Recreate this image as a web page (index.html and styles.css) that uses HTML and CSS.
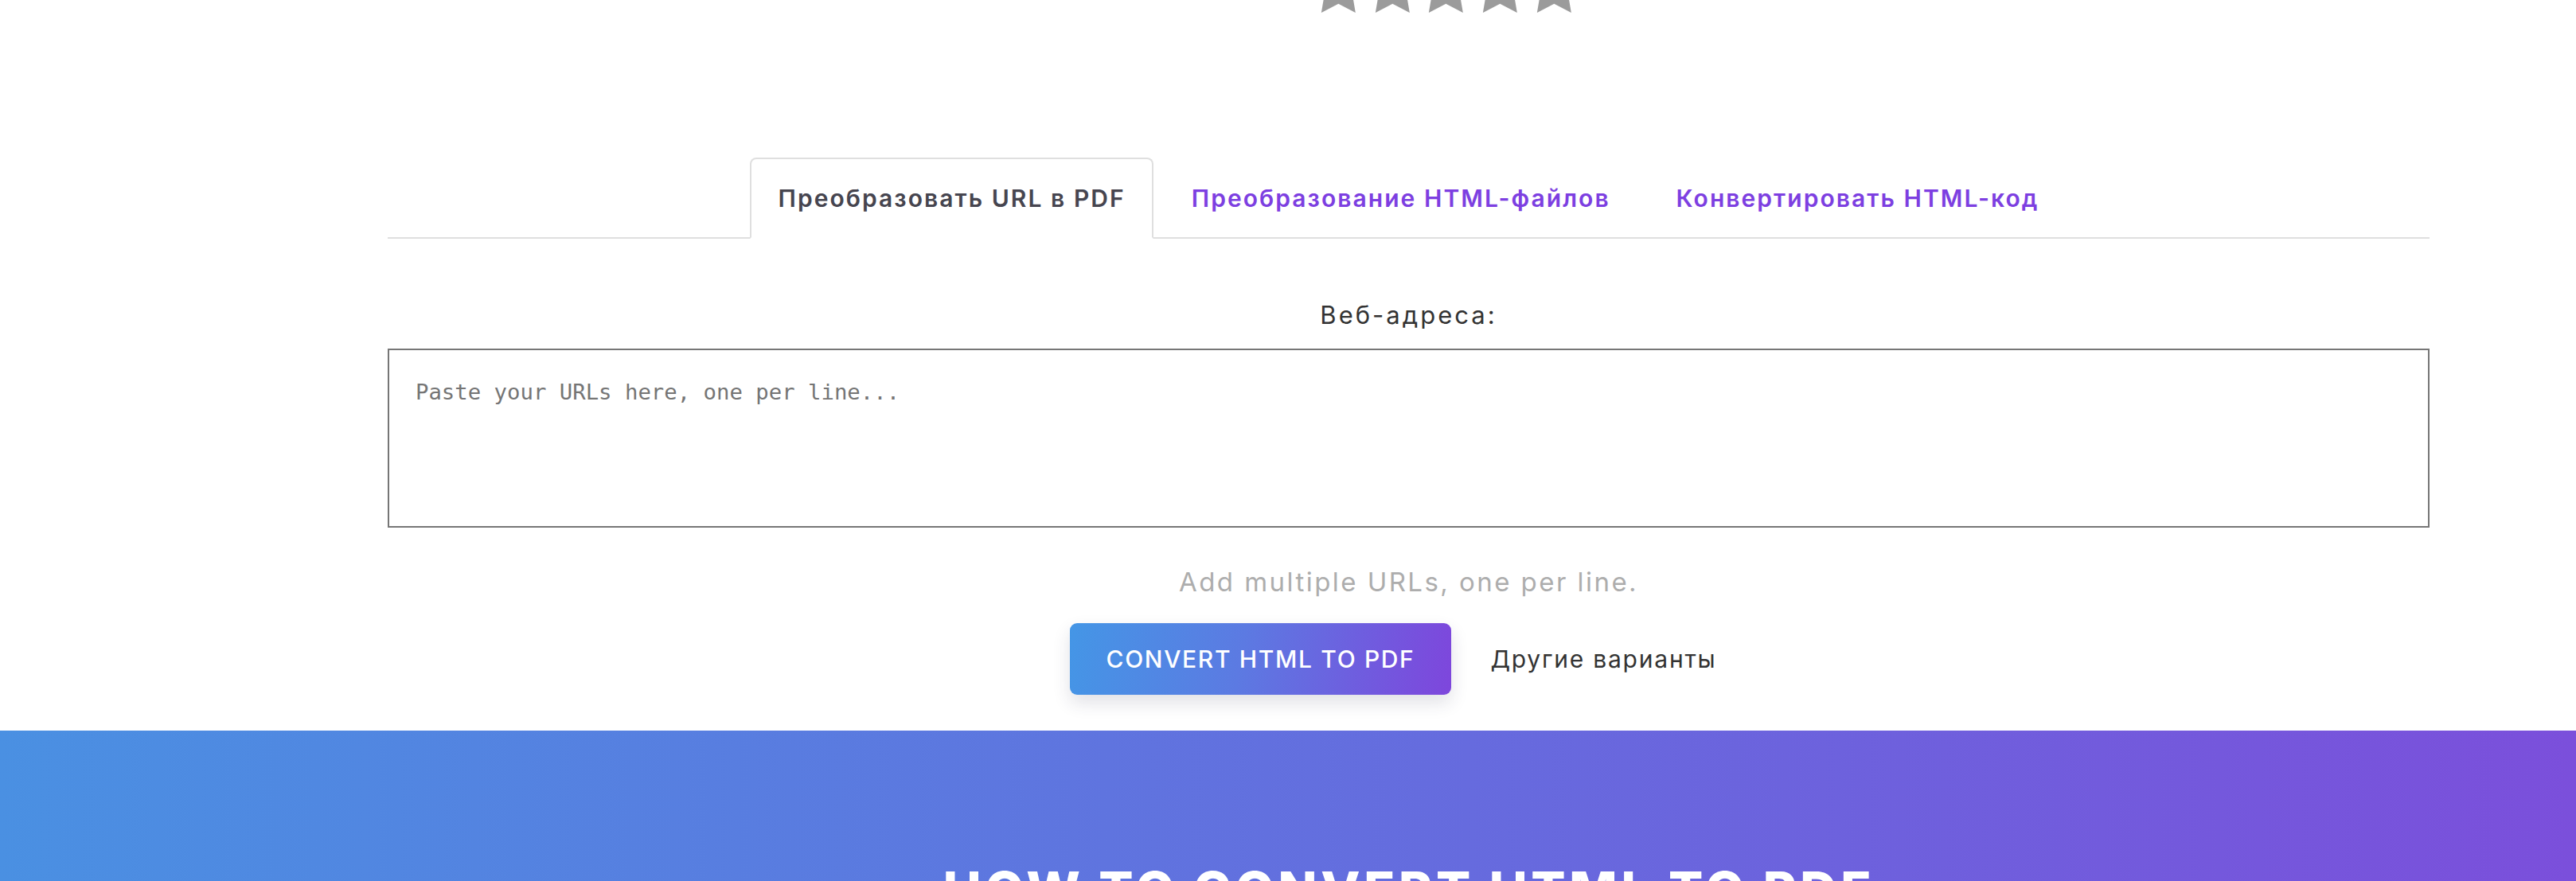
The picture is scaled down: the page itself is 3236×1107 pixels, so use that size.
FILE: index.html
```html
<!DOCTYPE html>
<html lang="ru">
<head>
<meta charset="utf-8">
<title>HTML в PDF</title>
<link rel="stylesheet" href="styles.css">
</head>
<body>
<div class="rating">
  <svg class="star" viewBox="5 16.42 14 4.6"><path d="M12 2l3.09 6.26L22 9.27l-5 4.87 1.18 6.88L12 17.77l-6.18 3.25L7 14.14 2 9.27l6.91-1.01L12 2z"/></svg>
  <svg class="star" viewBox="5 16.42 14 4.6"><path d="M12 2l3.09 6.26L22 9.27l-5 4.87 1.18 6.88L12 17.77l-6.18 3.25L7 14.14 2 9.27l6.91-1.01L12 2z"/></svg>
  <svg class="star" viewBox="5 16.42 14 4.6"><path d="M12 2l3.09 6.26L22 9.27l-5 4.87 1.18 6.88L12 17.77l-6.18 3.25L7 14.14 2 9.27l6.91-1.01L12 2z"/></svg>
  <svg class="star" viewBox="5 16.42 14 4.6"><path d="M12 2l3.09 6.26L22 9.27l-5 4.87 1.18 6.88L12 17.77l-6.18 3.25L7 14.14 2 9.27l6.91-1.01L12 2z"/></svg>
  <svg class="star" viewBox="5 16.42 14 4.6"><path d="M12 2l3.09 6.26L22 9.27l-5 4.87 1.18 6.88L12 17.77l-6.18 3.25L7 14.14 2 9.27l6.91-1.01L12 2z"/></svg>
</div>
<main class="tool">
  <ul class="tabs">
    <li class="tab active">Преобразовать URL в PDF</li>
    <li class="tab">Преобразование HTML-файлов</li>
    <li class="tab">Конвертировать HTML-код</li>
  </ul>
  <div class="pane">
    <label class="label" for="urls">Веб-адреса:</label>
    <textarea id="urls" class="urls" placeholder="Paste your URLs here, one per line..."></textarea>
    <p class="hint">Add multiple URLs, one per line.</p>
    <div class="actions">
      <button class="btn-convert" type="button">CONVERT HTML TO PDF</button>
      <button class="btn-more" type="button">Другие варианты</button>
    </div>
  </div>
</main>
<section class="howto">
  <h2 class="howto-title">HOW TO CONVERT HTML TO PDF</h2>
</section>
</body>
</html>
```

FILE: styles.css
```css
html, body {
  margin: 0;
  padding: 0;
  background: #fff;
}
body {
  font-family: Inter, "Noto Sans", sans-serif;
  color: #333;
  overflow: hidden;
}
.rating {
  display: flex;
  gap: 19px;
  padding-left: 1657px;
  height: 16px;
}
.star {
  display: block;
  width: 48.7px;
  height: 16px;
  fill: #9b9b9b;
}
.tool {
  margin-left: 487px;
  width: 2565px;
  padding-top: 182px;
}
.tabs {
  list-style: none;
  margin: 0;
  padding: 0;
  display: flex;
  justify-content: center;
  gap: 12px;
  border-bottom: 2px solid #dfdfdf;
}
.tab {
  margin-bottom: -2px;
  padding: 31px 33.5px;
  border: 2px solid transparent;
  border-radius: 8px 8px 0 0;
  font-size: 30px;
  line-height: 36px;
  font-weight: 600;
  letter-spacing: 2.05px;
  color: #7d3fe1;
}
.tab.active {
  color: #46454f;
  background: #fff;
  border-color: #dfdfdf #dfdfdf #fff;
}
.label {
  display: block;
  margin-top: 76px;
  text-align: center;
  font-size: 31px;
  line-height: 40px;
  letter-spacing: 3px;
  color: #333;
}
.urls {
  display: block;
  box-sizing: border-box;
  width: 100%;
  height: 225px;
  margin: 22px 0 0;
  padding: 37px 33px;
  border: 2px solid #767676;
  border-radius: 0;
  resize: none;
  font-family: "DejaVu Sans Mono", monospace;
  font-size: 27.3px;
  color: #333;
  background: #fff;
}
.urls::placeholder {
  color: #757575;
  opacity: 1;
}
.hint {
  margin: 48px 0 0;
  text-align: center;
  font-size: 33px;
  line-height: 40px;
  letter-spacing: 2.45px;
  color: #adadad;
}
.actions {
  display: flex;
  justify-content: center;
  margin-top: 32px;
}
.btn-convert {
  border: none;
  border-radius: 9px;
  padding: 27px 46px;
  font-family: inherit;
  font-size: 30px;
  line-height: 36px;
  font-weight: 500;
  letter-spacing: 1.65px;
  color: #fff;
  background: linear-gradient(100deg, #4496e6 0%, #5c7ae2 45%, #7e46dc 100%);
  box-shadow: 0 10px 22px rgba(40, 40, 80, 0.14);
}
.btn-more {
  margin-left: 10px;
  border: none;
  background: none;
  padding: 27px 39px;
  font-family: inherit;
  font-size: 30px;
  line-height: 36px;
  font-weight: 400;
  letter-spacing: 1.77px;
  color: #333;
}
.howto {
  margin-top: 45px;
  height: 400px;
  background: linear-gradient(to right, #4a90e2 0%, #7b4fdb 100%);
}
.howto-title {
  margin: 0 0 0 487px;
  width: 2565px;
  padding-top: 163px;
  text-align: center;
  font-size: 64px;
  line-height: 1.2;
  font-weight: 800;
  letter-spacing: 4.7px;
  color: #fff;
}
```
